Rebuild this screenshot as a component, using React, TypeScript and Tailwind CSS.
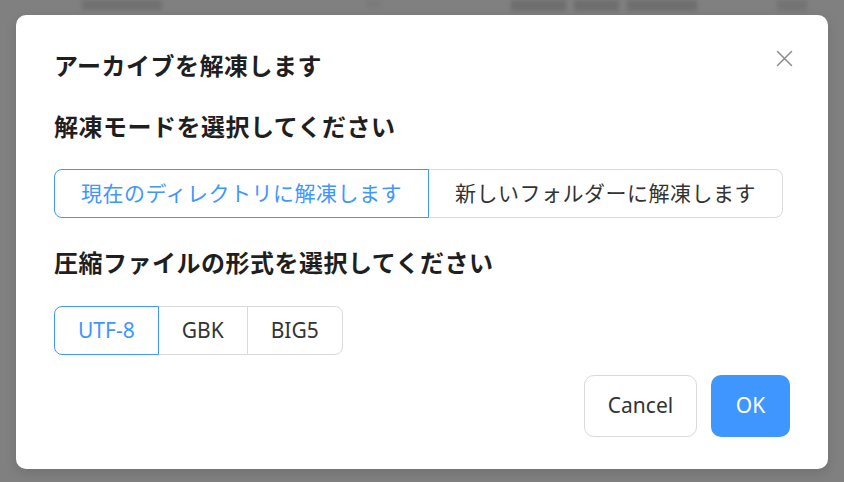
import React, { useState } from 'react';

const font = { fontFamily: '"Noto Sans", "Noto Sans CJK JP", sans-serif' };

const modes = ['現在のディレクトリに解凍します', '新しいフォルダーに解凍します'];
const encodings = ['UTF-8', 'GBK', 'BIG5'];

const Segmented: React.FC<{ items: string[]; value: string; onChange: (v: string) => void; pad: string }> = ({ items, value, onChange, pad }) => (
  <div className="flex">
    {items.map((item, i) => {
      const active = item === value;
      return (
        <button
          key={item}
          onClick={() => onChange(item)}
          className={[
            'h-[49px] text-[21px] border bg-white whitespace-nowrap relative',
            pad,
            i > 0 ? '-ml-px' : '',
            i === 0 ? 'rounded-l-[8px]' : '',
            i === items.length - 1 ? 'rounded-r-[8px]' : '',
            active ? 'border-[#4096ff] text-[#4096ff] z-10' : 'border-[#d9d9d9] text-[#333333]',
          ].join(' ')}
        >
          {item}
        </button>
      );
    })}
  </div>
);

export default function App() {
  const [mode, setMode] = useState(modes[0]);
  const [enc, setEnc] = useState(encodings[0]);

  return (
    <div style={font} className="w-[844px] h-[482px] bg-[#808080] overflow-hidden relative">
      {/* page behind the mask */}
      <div className="absolute top-0 left-0 right-0 h-[14px] flex items-start blur-[2px]">
        <span className="ml-[82px] w-[80px] h-[10px] bg-[#707070]"></span>
        <span className="ml-[205px] w-[14px] h-[8px] bg-[#7a7a7a]"></span>
        <span className="ml-[130px] w-[55px] h-[11px] bg-[#6e6e6e]"></span>
        <span className="ml-[8px] w-[45px] h-[11px] bg-[#6e6e6e]"></span>
        <span className="ml-[8px] w-[70px] h-[11px] bg-[#6e6e6e]"></span>
        <span className="ml-[80px] w-[30px] h-[11px] bg-[#737373]"></span>
      </div>

      <div className="pt-[15px] px-[16px]">
        <div className="relative bg-white rounded-[10px] px-[38px] pt-[35px] pb-[32px] shadow-[0_4px_12px_rgba(0,0,0,0.12)]">
          <button className="absolute top-[32px] right-[33px] w-[22px] h-[22px] flex items-center justify-center text-[#8c8c8c]">
            <svg width="17" height="17" viewBox="0 0 17 17" fill="none" stroke="currentColor" strokeWidth="1.5" strokeLinecap="round">
              <path d="M1.5 1.5 L15.5 15.5 M15.5 1.5 L1.5 15.5" />
            </svg>
          </button>

          <h2 className="text-[24px] leading-[32px] tracking-[0.5px] font-semibold text-[#1f1f1f]">アーカイブを解凍します</h2>

          <h3 className="mt-[29px] text-[24px] leading-[32px] tracking-[0.5px] font-semibold text-[#1f1f1f]">解凍モードを選択してください</h3>
          <div className="mt-[26px] tracking-[0.5px]">
            <Segmented items={modes} value={mode} onChange={setMode} pad="px-[26px]" />
          </div>

          <h3 className="mt-[29px] text-[24px] leading-[32px] tracking-[0.5px] font-semibold text-[#1f1f1f]">圧縮ファイルの形式を選択してください</h3>
          <div className="mt-[27px]">
            <Segmented items={encodings} value={enc} onChange={setEnc} pad="px-[23px]" />
          </div>

          <div className="mt-[20px] flex justify-end gap-[14px]">
            <button className="h-[62px] w-[113px] rounded-[10px] border border-[#d9d9d9] bg-white text-[21px] text-[#333333]">Cancel</button>
            <button className="h-[62px] w-[79px] rounded-[10px] bg-[#4096ff] text-[21px] text-white">OK</button>
          </div>
        </div>
      </div>
    </div>
  );
}
